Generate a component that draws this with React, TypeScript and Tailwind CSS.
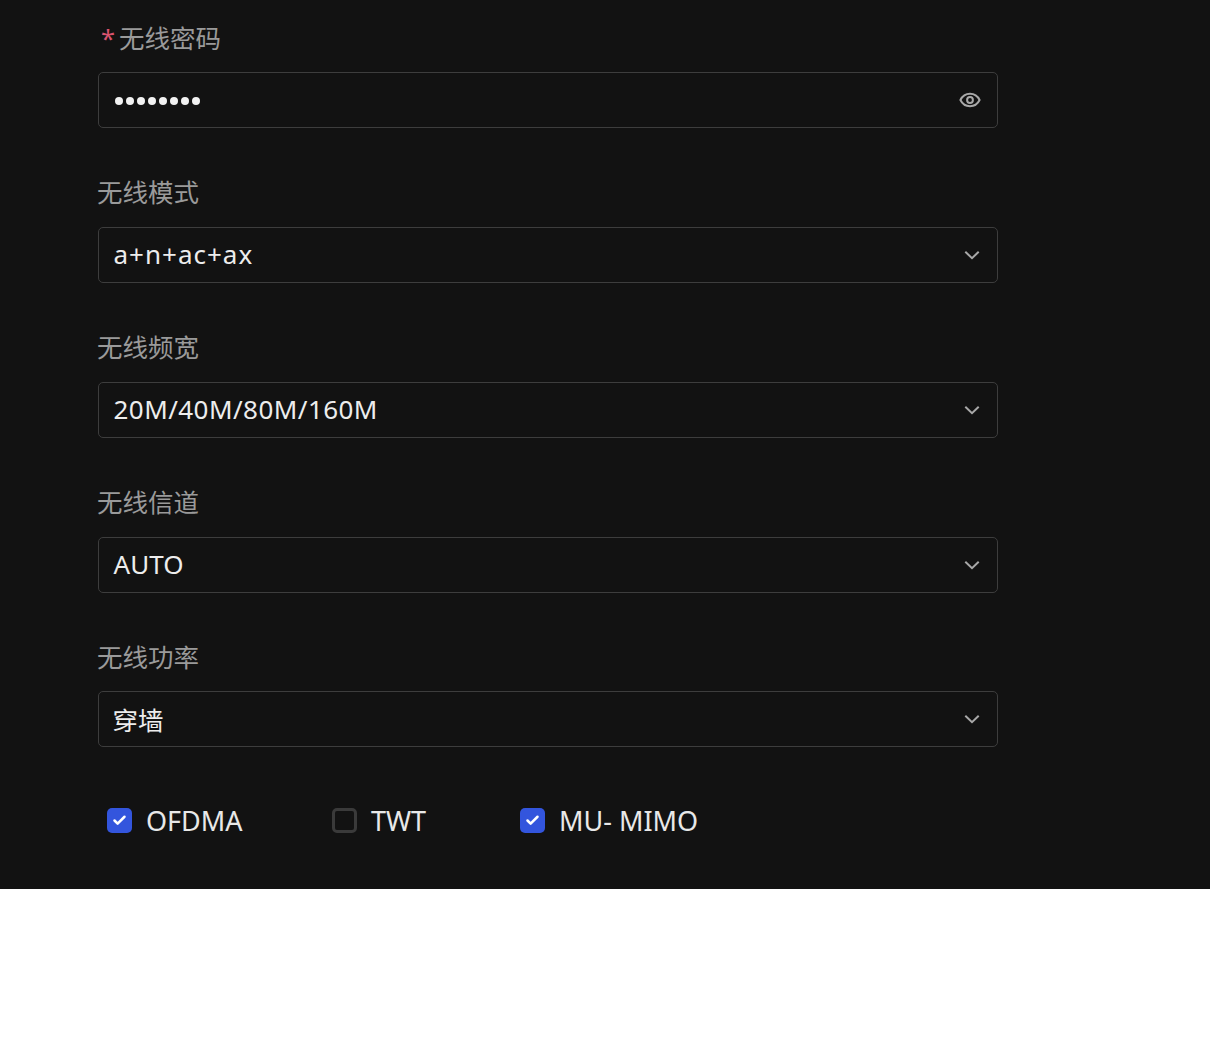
import { Check } from "lucide-react";

const font = "[font-family:'Noto_Sans','Noto_Sans_CJK_SC',sans-serif]";

function Eye() {
  return (
    <svg width="22" height="22" viewBox="0 0 22 22" fill="none" stroke="#a8a8a8" strokeWidth="2">
      <path d="M1.4 11C3.4 7 7 4.8 11 4.8s7.6 2.2 9.6 6.2c-2 4-5.6 6.2-9.6 6.2S3.4 15 1.4 11z" strokeLinejoin="round" />
      <circle cx="11" cy="11" r="2.9" />
    </svg>
  );
}

function Chevron() {
  return (
    <svg width="18" height="18" viewBox="0 0 18 18" fill="none" stroke="#a8a8a8" strokeWidth="2">
      <path d="M2.3 5.8L9 12.2l6.7-6.4" />
    </svg>
  );
}

function Field({
  label,
  value,
  valueClass,
  labelClass,
  last,
}: {
  label: string;
  value: string;
  valueClass: string;
  labelClass: string;
  last?: boolean;
}) {
  return (
    <div className={last ? "" : "mb-[46.8px]"}>
      <div className={`h-9 mb-4 -ml-px text-[25.5px] leading-9 text-[#9a9a9a] ${labelClass}`}>{label}</div>
      <div className="h-14 border border-[#3d3d3d] rounded-[5px] flex items-center justify-between pl-[14.5px] pr-[16px] text-[#ededed]">
        <span className={valueClass}>{value}</span>
        <Chevron />
      </div>
    </div>
  );
}

function Opt({ label, on, className }: { label: string; on: boolean; className: string }) {
  return (
    <div className={`flex items-center gap-[14px] ${className}`}>
      <div
        className={`w-[25px] h-[25px] rounded-[5px] flex items-center justify-center ${
          on ? "bg-[#3355dd]" : "border-[3px] border-[#3a3a3a]"
        }`}
      >
        {on && <Check size={15} strokeWidth={4} color="#fff" />}
      </div>
      <span className="text-[27px] leading-9 text-[#e8e8e8] translate-y-px">{label}</span>
    </div>
  );
}

export default function App() {
  return (
    <div className={`min-h-[1049px] bg-white ${font}`}>
      <div className="h-[889px] bg-[#121212] pl-[98px] pt-[21px]">
        <div className="w-[900px]">
          <div className="h-9 mb-[15.2px] -translate-y-px text-[25.5px] leading-9 text-[#9a9a9a] flex">
            <span className="text-[#d9536f] w-[21px] text-right pr-[4px]">*</span>
            <span>无线密码</span>
          </div>
          <div className="h-14 mb-[46.8px] border border-[#3d3d3d] rounded-[5px] flex items-center justify-between pl-[16px] pr-[16px] text-[#ededed]">
            <span className="flex gap-[3px] translate-y-px">
              {[0, 1, 2, 3, 4, 5, 6, 7].map((i) => (
                <span key={i} className="w-[8px] h-[8px] rounded-full bg-[#f2f2f2]" />
              ))}
            </span>
            <Eye />
          </div>
          <Field label="无线模式" labelClass="-translate-y-px" value="a+n+ac+ax" valueClass="text-[26px] tracking-[1px]" />
          <Field label="无线频宽" labelClass="-translate-y-px" value="20M/40M/80M/160M" valueClass="text-[26px] tracking-[0.45px]" />
          <Field label="无线信道" labelClass="-translate-y-px" value="AUTO" valueClass="text-[26px] tracking-[0.1px]" />
          <Field label="无线功率" labelClass="" value="穿墙" valueClass="text-[25.5px] -ml-px translate-y-px" last />
          <div className="flex mt-[55px] pl-[9px]">
            <Opt label="OFDMA" on className="w-[225px]" />
            <Opt label="TWT" on={false} className="w-[188px]" />
            <Opt label="MU- MIMO" on className="" />
          </div>
        </div>
      </div>
    </div>
  );
}
